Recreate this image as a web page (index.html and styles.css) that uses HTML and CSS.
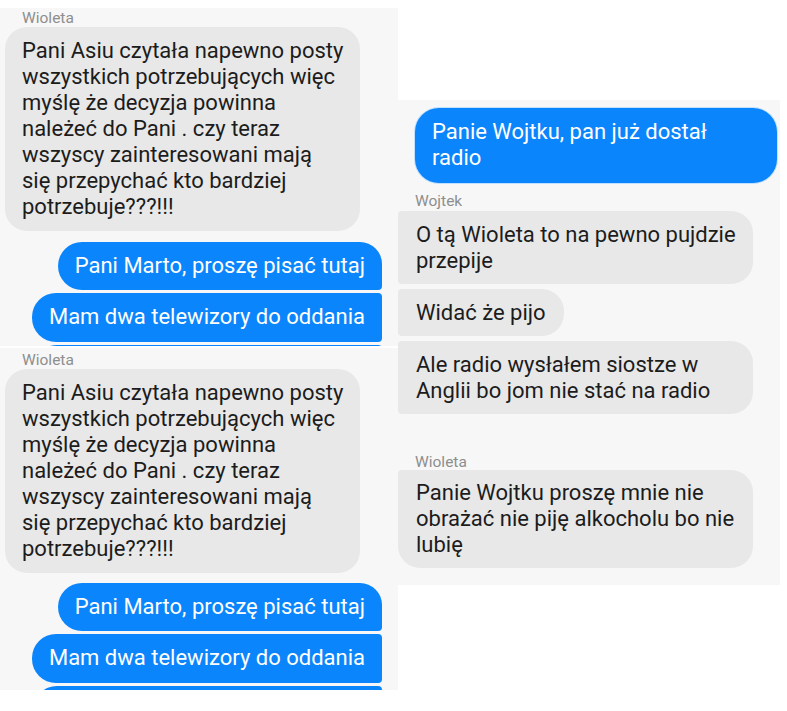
FILE: index.html
```html
<!DOCTYPE html>
<html lang="pl">
<head>
<meta charset="utf-8">
<link rel="stylesheet" href="styles.css">
</head>
<body>
<div class="collage">
  <div class="left-col">
    <section class="panel panel-a">
      <div class="name">Wioleta</div>
      <div class="msg recv single wide">Pani Asiu czytała napewno posty<br>wszystkich potrzebujących więc<br>myślę że decyzja powinna<br>należeć do Pani . czy teraz<br>wszyscy zainteresowani mają<br>się przepychać kto bardziej<br>potrzebuje???!!!</div>
      <div class="sent-group">
        <div class="msg sent first">Pani Marto, proszę pisać tutaj</div>
        <div class="msg sent mid">Mam dwa telewizory do oddania</div>
        <div class="msg sent mid peek">&nbsp;</div>
      </div>
    </section>
    <section class="panel panel-b">
      <div class="name">Wioleta</div>
      <div class="msg recv single wide">Pani Asiu czytała napewno posty<br>wszystkich potrzebujących więc<br>myślę że decyzja powinna<br>należeć do Pani . czy teraz<br>wszyscy zainteresowani mają<br>się przepychać kto bardziej<br>potrzebuje???!!!</div>
      <div class="sent-group">
        <div class="msg sent first">Pani Marto, proszę pisać tutaj</div>
        <div class="msg sent mid">Mam dwa telewizory do oddania</div>
        <div class="msg sent mid peek">&nbsp;</div>
      </div>
    </section>
  </div>
  <section class="panel panel-r">
    <div class="msg sent single radio">Panie Wojtku, pan już dostał<br>radio</div>
    <div class="name name-r">Wojtek</div>
    <div class="recv-group">
      <div class="msg recv first r-wide">O tą Wioleta to na pewno pujdzie<br>przepije</div>
      <div class="msg recv mid">Widać że pijo</div>
      <div class="msg recv last r-wide">Ale radio wysłałem siostze w<br>Anglii bo jom nie stać na radio</div>
    </div>
    <div class="name name-r name-w">Wioleta</div>
    <div class="msg recv single r-wide">Panie Wojtku proszę mnie nie<br>obrażać nie piję alkocholu bo nie<br>lubię</div>
  </section>
</div>
</body>
</html>
```
FILE: styles.css
```css
* { box-sizing: border-box; }
html, body { margin: 0; padding: 0; background: #ffffff; }
body { font-family: Roboto, "Noto Sans", sans-serif; width: 787px; height: 711px; overflow: hidden; }

.collage { display: flex; align-items: flex-start; }
.left-col { width: 398px; display: flex; flex-direction: column; gap: 2px; padding-top: 8px; }

.panel { background: #f7f7f7; overflow: hidden; display: flex; flex-direction: column; }
.panel-a { height: 338px; }
.panel-b { height: 342px; }
.panel-r { width: 382px; height: 485px; margin-top: 100px; }

.name { font-size: 15.5px; line-height: 18px; color: #8e8e8e; padding-left: 22px; }
.panel-a .name { margin-top: 1px; height: 19px; }
.panel-b .name { margin-top: 3px; height: 19px; }

.msg { font-size: 22px; line-height: 26px; white-space: nowrap; }
.recv { background: #e8e8e8; color: #1c1c1c; }
.sent { background: #0b85fc; color: #ffffff; }

.wide { margin-left: 5px; width: 355px; height: 204px; padding: 11px 16px 11px 17px; border-radius: 22px; }

.sent-group { display: flex; flex-direction: column; align-items: flex-end; gap: 3px; padding-right: 16px; margin-top: 10px; }
.panel-a .sent-group { margin-top: 11px; }
.sent-group .msg { padding: 11px 17px 11px 17px; }
.sent.first { border-radius: 24px 22px 4px 24px; height: 48px; }
.sent.mid { border-radius: 24px 4px 4px 24px; height: 49px; }
.sent.peek { width: 349px; }

.radio { margin: 8px 3px 0 17px; padding: 11px 17px 12px 17px; border-radius: 24px; height: 75px; box-shadow: 0 0 0 1px #bfe0ff; }

.name-r { padding-left: 17px; margin-top: 9px; height: 19px; line-height: 19px; }
.name-w { margin-top: 39px; height: 17px; }

.recv-group { display: flex; flex-direction: column; align-items: flex-start; gap: 5px; }
.recv-group .msg { padding: 10.5px 18px 10.5px 18px; }
.r-wide { width: 355px; }
.recv.mid { height: 47px; }
.recv.first { border-radius: 4px 22px 22px 4px; }
.recv.mid { border-radius: 4px 22px 22px 4px; }
.recv.last { border-radius: 4px 22px 22px 4px; }
.panel-r > .recv.single { padding: 10px 18px 10px 18px; height: 98px; border-radius: 4px 22px 22px 22px; }
```
